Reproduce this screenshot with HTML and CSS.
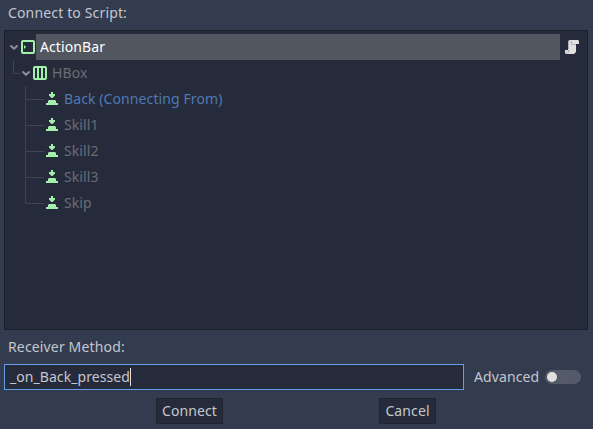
FILE: index.html
```html
<!DOCTYPE html>
<html lang="en">
<head>
<meta charset="utf-8">
<title>Connect Signal</title>
<link rel="stylesheet" href="styles.css">
</head>
<body>
<svg class="defs" aria-hidden="true">
  <symbol id="chevron" viewBox="0 0 12 12"><path d="M3 5 6 7.8 9 5" fill="none" stroke="#8a8d98" stroke-width="2.1" stroke-linecap="round" stroke-linejoin="round"/></symbol>
  <symbol id="button" viewBox="0 0 16 16"><path d="M7 1h2v2h2v1.5L8.5 7h-1L5 4.5V3h2zM4 12v-2l1-1h6l1 1v2h2v2H2v-2z" fill="#a5efac"/></symbol>
</svg>
<main class="dialog">
  <label class="label">Connect to Script:</label>
  <section class="tree">
    <div class="row">
      <svg class="chevron"><use href="#chevron"/></svg>
      <svg class="icon" viewBox="0 0 16 16"><rect x="2" y="2" width="12" height="12" rx="1" fill="none" stroke="#a5efac" stroke-width="2"/><path d="M4 6l2 2-2 2z" fill="#a5efac"/></svg>
      <span class="name selected">ActionBar</span>
      <svg class="script" viewBox="0 0 16 16"><path d="M5 1h9l1 1v3h-3v8l-2 2H2l-1-1v-3h3V3z" fill="#e0e0e0"/><path d="M4.5 10V3.5l1-2M7.5 2v3.5H12M4.5 11v2l-1 1.5" fill="none" stroke="#b0b1b3"/><path d="M2 12h1v1H2z" fill="#b5b5b5"/></svg>
    </div>
    <div class="row">
      <svg class="guide root" viewBox="0 0 12 26"><path d="M5.5 0v13.5H12" /></svg>
      <svg class="chevron"><use href="#chevron"/></svg>
      <svg class="icon" viewBox="0 0 16 16"><rect x="2" y="2" width="12" height="12" rx="1" fill="none" stroke="#a5efac" stroke-width="2"/><path d="M6 2v12M10 2v12" stroke="#a5efac" stroke-width="2"/></svg>
      <span class="name">HBox</span>
    </div>
    <div class="row child"><svg class="guide" viewBox="0 0 24 26"><path d="M5.5 0v26M5.5 13.5H24"/></svg><svg class="icon"><use href="#button"/></svg><span class="name source">Back (Connecting From)</span></div>
    <div class="row child"><svg class="guide" viewBox="0 0 24 26"><path d="M5.5 0v26M5.5 13.5H24"/></svg><svg class="icon"><use href="#button"/></svg><span class="name">Skill1</span></div>
    <div class="row child"><svg class="guide" viewBox="0 0 24 26"><path d="M5.5 0v26M5.5 13.5H24"/></svg><svg class="icon"><use href="#button"/></svg><span class="name">Skill2</span></div>
    <div class="row child"><svg class="guide" viewBox="0 0 24 26"><path d="M5.5 0v26M5.5 13.5H24"/></svg><svg class="icon"><use href="#button"/></svg><span class="name">Skill3</span></div>
    <div class="row child"><svg class="guide" viewBox="0 0 24 26"><path d="M5.5 0v13.5H24"/></svg><svg class="icon"><use href="#button"/></svg><span class="name">Skip</span></div>
  </section>
  <label class="label receiver">Receiver Method:</label>
  <div class="method">
    <div class="field"><span>_on_Back_pressed</span><i class="caret"></i></div>
    <span class="advanced">Advanced</span>
    <span class="toggle"></span>
  </div>
  <div class="actions">
    <button class="connect">Connect</button>
    <button class="cancel">Cancel</button>
  </div>
</main>
</body>
</html>
```

FILE: styles.css
```css
* { box-sizing: border-box; }
body {
  margin: 0;
  background: #333b4f;
  color: #c4c7ce;
  font: 14px/20px "Noto Sans", sans-serif;
  letter-spacing: 0.1px;
  overflow: hidden;
}
svg { display: block; flex: none; }
.defs { position: absolute; width: 0; height: 0; }
.dialog {
  height: 429px;
  padding: 3px 5px 5px 4px;
  display: flex;
  flex-direction: column;
}
.label { height: 20px; padding-left: 4px; letter-spacing: 0.15px; }
.tree {
  height: 300px;
  margin-top: 7px;
  padding: 3px 7px 0 3px;
  border: 1px solid #1c202c;
  background: #262b3b;
}
.row { display: flex; align-items: center; height: 26px; }
.chevron { width: 12px; height: 12px; }
.icon { width: 16px; height: 16px; }
.guide { width: 24px; height: 26px; fill: none; stroke: #414551; }
.guide.root { width: 12px; }
.child { padding-left: 12px; }
.name {
  height: 26px;
  padding-left: 4px;
  line-height: 26px;
  color: #696c76;
  white-space: nowrap;
}
.selected { flex: none; width: 524px; background: #525661; color: #fff; }
.source { color: #5079b5; }
.script { width: 16px; height: 16px; margin-left: 4px; }
.receiver { margin-top: 7px; }
.method { display: flex; align-items: center; height: 26px; margin-top: 7px; }
.field {
  display: flex;
  align-items: center;
  width: 460px;
  height: 26px;
  padding-left: 5px;
  border: 1px solid #699ce8;
  background: #262b3b;
}
.field span { letter-spacing: 0.06px; }
.caret { width: 1px; height: 18px; background: #e0e0e0; }
.advanced { width: 81px; padding-left: 10px; }
.toggle {
  width: 36px;
  height: 14px;
  padding: 2px;
  border-radius: 7px;
  background: #545a69;
}
.toggle::before {
  content: "";
  display: block;
  width: 10px;
  height: 10px;
  border-radius: 50%;
  background: #e0e0e0;
}
.actions { display: flex; gap: 156px; margin: 8px 0 0 152px; }
button {
  height: 26px;
  padding: 0;
  border: 1px solid #202431;
  border-radius: 0;
  background: #262b3b;
  color: inherit;
  font: inherit;
  letter-spacing: 0.1px;
}
.connect { width: 67px; }
.cancel { width: 57px; }
```
